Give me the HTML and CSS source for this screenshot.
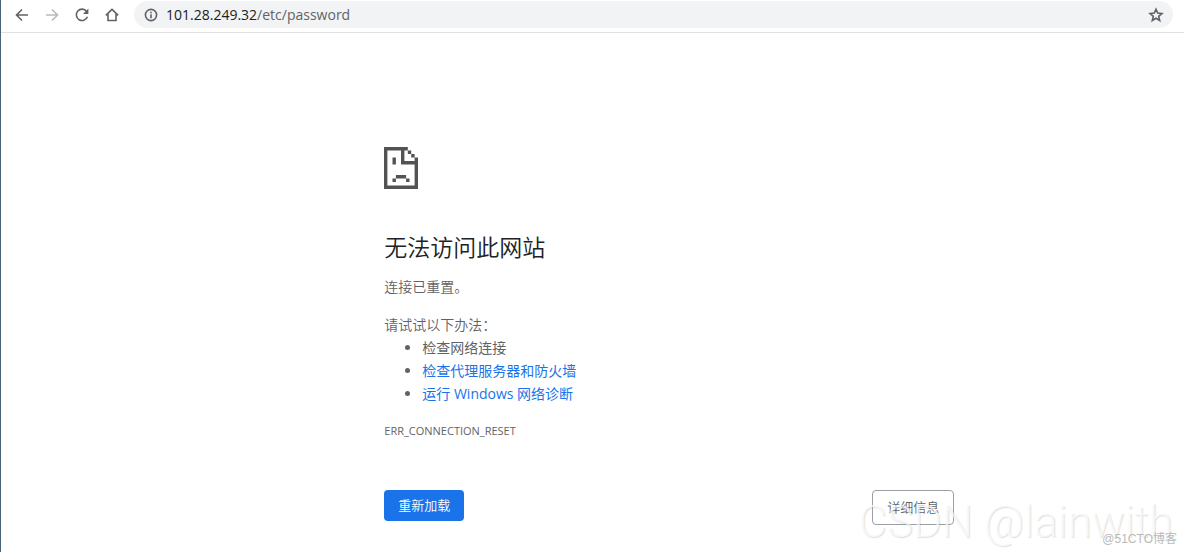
FILE: index.html
```html
<!DOCTYPE html>
<html lang="zh-CN">
<head>
<meta charset="utf-8">
<title>101.28.249.32</title>
<link rel="stylesheet" href="styles.css">
</head>
<body>
<header class="toolbar">
  <button class="tool" type="button" aria-label="后退"><svg viewBox="0 0 16 16"><path d="M14 8H3M8 2.5 2.5 8 8 13.5"/></svg></button>
  <button class="tool tool-off" type="button" aria-label="前进" disabled><svg viewBox="0 0 16 16"><path d="M2 8h11M8 2.5 13.5 8 8 13.5"/></svg></button>
  <button class="tool" type="button" aria-label="刷新"><svg viewBox="0 0 16 16"><path d="M12.6 4.4A5.7 5.7 0 1 0 13.4 9.8"/><path class="solid" d="M14.4 1.6v5.4H9z"/></svg></button>
  <button class="tool" type="button" aria-label="主页"><svg viewBox="0 0 16 16"><path d="M1.8 8.4 8 2.4l6.2 6M4 7v6.5h8V7"/></svg></button>
  <div class="omnibox">
    <svg class="info" viewBox="0 0 16 16" aria-hidden="true"><circle cx="8" cy="8" r="5.6"/><path d="M8 7.2v4M8 4.7v1.5"/></svg>
    <div class="url"><span class="host">101.28.249.32</span>/etc/password</div>
    <button class="star" type="button" aria-label="为此标签页添加书签"><svg viewBox="0 0 16 16"><path d="m8 2.2 1.7 3.9 4.2.4-3.2 2.8 1 4.2L8 11.3l-3.7 2.2 1-4.2-3.2-2.8 4.2-.4z"/></svg></button>
  </div>
</header>
<main class="error">
  <svg class="sad" viewBox="0 0 20 24" preserveAspectRatio="none" aria-hidden="true">
    <path d="M0 0h14v2H2v20h16V10h-8V2h2v6h6V6h2v18H0zM14 2h2v2h-2zM16 4h2v2h-2zM5 6h2v4H5zM7 16h6v2H7zM5 18h2v2H5zM13 18h2v2h-2z"/>
  </svg>
  <h1 class="title">无法访问此网站</h1>
  <p class="summary">连接已重置。</p>
  <div class="suggest">
    <p class="lead">请试试以下办法：</p>
    <ul class="list">
      <li>检查网络连接</li>
      <li><a href="#proxy">检查代理服务器和防火墙</a></li>
      <li><a href="#diagnose">运行 Windows 网络诊断</a></li>
    </ul>
  </div>
  <div class="code">ERR_CONNECTION_RESET</div>
  <div class="actions">
    <button class="btn primary" type="button">重新加载</button>
    <button class="btn outline" type="button">详细信息</button>
  </div>
</main>
<div class="mark">CSDN @lainwith</div>
<div class="mark-site">@51CTO博客</div>
</body>
</html>
```
FILE: styles.css
```css
* { box-sizing: border-box; }
body {
  margin: 0;
  min-height: 100vh;
  border-left: 1px solid #4a6478;
  background: #fff;
  color: #5f6368;
  font: 14px/23px "Open Sans", "Noto Sans CJK SC", sans-serif;
}
button { font: inherit; cursor: pointer; }
svg { display: block; fill: none; stroke: #5f6368; stroke-width: 1.6; }
.toolbar {
  display: flex;
  align-items: center;
  gap: 14px;
  padding: 1px 11px 4px 13px;
  border-bottom: 1px solid #dfe1e5;
}
.tool, .star { padding: 0; border: 0; background: none; }
.tool svg, .star svg, .info { width: 16px; height: 16px; }
.tool-off svg { stroke: #b8babd; }
.solid { fill: #5f6368; stroke: none; }
.omnibox {
  flex: 1;
  display: flex;
  align-items: center;
  height: 27px;
  padding: 0 9px;
  border-radius: 14px;
  background: #f1f3f4;
}
.url { flex: 1; margin-left: 7px; }
.host { color: #202124; }
.error {
  max-width: 570px;
  margin-left: 32.4%;
  padding-top: 114px;
}
.sad { width: 34px; height: 42px; fill: #535353; stroke: none; }
.title {
  margin: 41px 0 11px;
  color: #202124;
  font-size: 23px;
  font-weight: 350;
  line-height: 34px;
}
.summary, .lead, .btn { font-weight: 350; }
.summary { margin: 0 0 15px; }
.lead { margin: 0; }
.list { margin: 0; padding-left: 38px; }
a { color: #1a73e8; text-decoration: none; }
.code { margin-top: 14px; font-size: 11px; }
.actions {
  display: flex;
  justify-content: space-between;
  align-items: flex-start;
  margin-top: 48px;
}
.btn {
  padding: 4px 14px;
  border: 0;
  border-radius: 4px;
  font-size: 13px;
}
.primary { background: #1a73e8; color: #fff; }
.outline { padding: 5px 14px; border: 1px solid #9aa0a6; background: #fff; color: #5f6368; }
.mark, .mark-site { position: absolute; pointer-events: none; white-space: nowrap; }
.mark {
  right: 11px;
  bottom: 5px;
  color: rgba(255, 255, 255, 0.7);
  font: 300 44px/50px Roboto, sans-serif;
  text-shadow: 1px 1px 1px rgba(0, 0, 0, 0.12);
}
.mark-site {
  right: 7px;
  bottom: 4px;
  color: #b9b9b9;
  font: 12px/18px "Liberation Sans", "Noto Sans CJK SC", sans-serif;
}
```
